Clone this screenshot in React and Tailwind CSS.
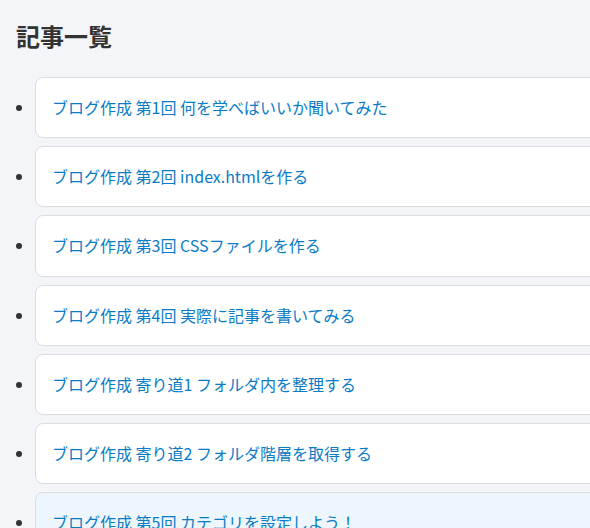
import React from "react";

// ── Article list data ───────────────────────────────────────────
const articles = [
  { title: "ブログ作成 第1回 何を学べばいいか聞いてみた" },
  { title: "ブログ作成 第2回 index.htmlを作る" },
  { title: "ブログ作成 第3回 CSSファイルを作る" },
  { title: "ブログ作成 第4回 実際に記事を書いてみる" },
  { title: "ブログ作成 寄り道1 フォルダ内を整理する" },
  { title: "ブログ作成 寄り道2 フォルダ階層を取得する" },
  { title: "ブログ作成 第5回 カテゴリを設定しよう！", hover: true },
];

const App = () => {
  return (
    <div
      className="w-full h-[528px] overflow-hidden bg-[#f4f5f9] text-[#333]"
      style={{ fontFamily: '"Noto Sans CJK JP", sans-serif' }}
    >
      <h2 className="pl-4 pt-[18px] text-[24px] leading-[36px] font-bold text-[#333]">
        記事一覧
      </h2>

      <ul className="list-disc pl-[35px] mt-[23px] w-[900px] flex flex-col gap-2 text-[16px]">
        {articles.map((a) => (
          <li key={a.title}>
            <a
              href="#"
              className={
                "block px-4 py-4 leading-[1.7] rounded-lg border border-[#dcdde1] text-[#0a7cc6] " +
                (a.hover ? "bg-[#eef6fd]" : "bg-white")
              }
            >
              {a.title}
            </a>
          </li>
        ))}
      </ul>
    </div>
  );
};

export default App;
